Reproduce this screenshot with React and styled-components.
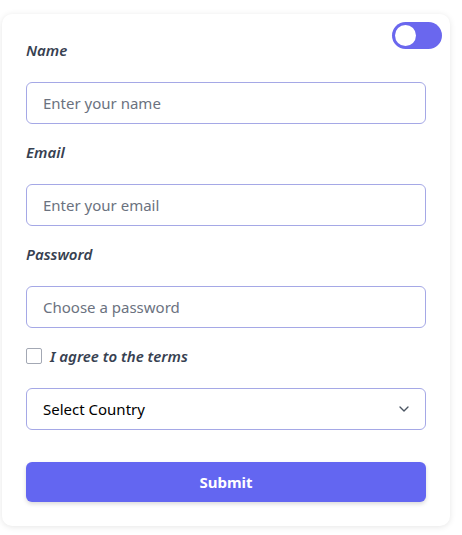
import React, { useState } from 'react'
import styled, { createGlobalStyle } from 'styled-components'
import { ChevronDown } from 'lucide-react'

const GlobalStyle = createGlobalStyle`
  * { box-sizing: border-box; }
  body {
    margin: 0;
    background: #ffffff;
    font-family: "Noto Sans", "Open Sans", sans-serif;
  }
`

const Page = styled.div`
  padding: 14px 12px 8px 2px;
`

const Card = styled.form`
  position: relative;
  width: 448px;
  background: #ffffff;
  border-radius: 10px;
  box-shadow: 0 1px 6px rgba(0, 0, 0, 0.1);
  padding: 24px;
  display: flex;
  flex-direction: column;
`

const Toggle = styled.button`
  position: absolute;
  top: 8px;
  right: 8px;
  width: 50px;
  height: 27px;
  border: none;
  border-radius: 14px;
  background: #6a67ee;
  padding: 0;
  cursor: pointer;
`

const Knob = styled.span`
  position: absolute;
  top: 3px;
  left: ${(p) => (p.on ? '26px' : '3px')};
  width: 21px;
  height: 21px;
  border-radius: 50%;
  background: #ffffff;
`

const Label = styled.label`
  display: block;
  font-size: 15px;
  line-height: 24px;
  font-weight: 600;
  font-style: italic;
  color: #374151;
  margin-top: ${(p) => (p.first ? '0' : '16px')};
  margin-bottom: 20px;
`

const Input = styled.input`
  width: 100%;
  height: 42px;
  border: 1px solid #a5a8e6;
  border-radius: 6px;
  padding: 0 16px;
  font-family: inherit;
  font-size: 15px;
  color: #111827;
  outline: none;
  &::placeholder {
    color: #6b7280;
  }
`

const CheckRow = styled.label`
  display: flex;
  align-items: center;
  gap: 8px;
  margin-top: 16px;
  height: 24px;
  font-size: 15px;
  font-weight: 600;
  font-style: italic;
  color: #374151;
`

const Check = styled.input`
  appearance: none;
  width: 16px;
  height: 16px;
  margin: 0;
  border: 1px solid #a3a8b4;
  border-radius: 2px;
  background: #ffffff;
`

const SelectWrap = styled.div`
  position: relative;
  margin-top: 20px;
`

const Select = styled.select`
  appearance: none;
  width: 100%;
  height: 42px;
  border: 1px solid #a5a8e6;
  border-radius: 6px;
  padding: 0 16px;
  background: #ffffff;
  font-family: inherit;
  font-size: 15px;
  color: #000000;
  outline: none;
`

const Arrow = styled(ChevronDown)`
  position: absolute;
  right: 14px;
  top: 13px;
  color: #4b5563;
  pointer-events: none;
`

const Submit = styled.button`
  margin-top: 32px;
  height: 40px;
  border: none;
  border-radius: 6px;
  background: #6366f1;
  color: #ffffff;
  font-family: inherit;
  font-size: 15px;
  font-weight: 700;
  box-shadow: 0 2px 4px rgba(0, 0, 0, 0.15);
  cursor: pointer;
`

const fields = [
  { id: 'name', label: 'Name', type: 'text', placeholder: 'Enter your name' },
  { id: 'email', label: 'Email', type: 'email', placeholder: 'Enter your email' },
  { id: 'password', label: 'Password', type: 'password', placeholder: 'Choose a password' },
]

export default function App() {
  const [on, setOn] = useState(false)
  return (
    <>
      <GlobalStyle />
      <Page>
        <Card onSubmit={(e) => e.preventDefault()}>
          <Toggle type="button" onClick={() => setOn(!on)}>
            <Knob on={on ? 1 : 0} />
          </Toggle>
          {fields.map((f, i) => (
            <React.Fragment key={f.id}>
              <Label htmlFor={f.id} first={i === 0 ? 1 : 0}>{f.label}</Label>
              <Input id={f.id} type={f.type} placeholder={f.placeholder} />
            </React.Fragment>
          ))}
          <CheckRow>
            <Check type="checkbox" />
            I agree to the terms
          </CheckRow>
          <SelectWrap>
            <Select defaultValue="">
              <option value="">Select Country</option>
              <option value="us">United States</option>
              <option value="uk">United Kingdom</option>
            </Select>
            <Arrow size={16} />
          </SelectWrap>
          <Submit type="submit">Submit</Submit>
        </Card>
      </Page>
    </>
  )
}
